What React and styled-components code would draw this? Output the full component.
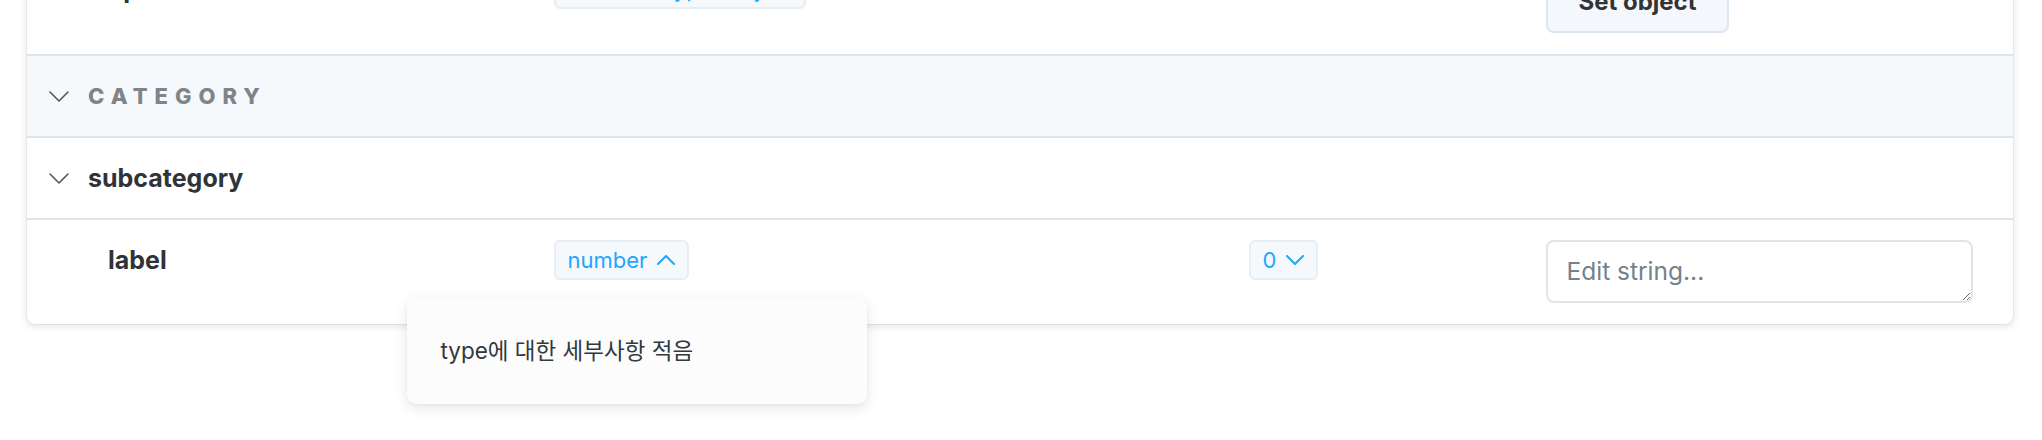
import styled, { createGlobalStyle } from 'styled-components'

const GlobalStyle = createGlobalStyle`
  html, body {
    margin: 0;
    padding: 0;
    background: #fff;
  }
  body {
    min-height: 100vh;
    font-family: Inter, "Noto Sans CJK KR", sans-serif;
    color: #2e3438;
  }
`

// page is scrolled a little: the first row is partly above the top edge
const Page = styled.div`
  box-sizing: border-box;
  min-height: calc(100vh + 51px);
  padding: 0 29px 0 27px;
  margin-top: -51px;
`

const Table = styled.div`
  background: #fff;
  border-radius: 8px;
  box-shadow: 0 0 0 1px rgba(0, 0, 0, 0.05), 0 2px 6px 2px rgba(0, 0, 0, 0.08);
  & > * + * {
    border-top: 2px solid #dee6ea;
  }
`

const Row = styled.div`
  display: grid;
  grid-template-columns: 25% 35% 15% 25%;
`

const Cell = styled.div`
  padding: 20px 30px 21px;
  display: flex;
  align-items: flex-start;
  &:first-child {
    padding-left: 81px;
  }
  &:last-child {
    padding-right: 40px;
  }
`

const SectionRow = styled.div`
  height: 80px;
  display: flex;
  align-items: center;
  gap: 19px;
  padding-left: 22px;
  background: ${p => (p.$sub ? '#fff' : '#f6f9fc')};
`

const SectionTitle = styled.span`
  font-size: ${p => (p.$sub ? '25px' : '22px')};
  font-weight: ${p => (p.$sub ? 700 : 800)};
  letter-spacing: ${p => (p.$sub ? 'normal' : '7px')};
  text-transform: ${p => (p.$sub ? 'none' : 'uppercase')};
  color: ${p => (p.$sub ? '#2e3438' : '#7f8489')};
`

const Name = styled.span`
  font-size: 25px;
  font-weight: 700;
  line-height: 40px;
  color: #2e3438;
`

const Chip = styled.span`
  position: relative;
  display: inline-flex;
  align-items: center;
  gap: 10px;
  height: 40px;
  box-sizing: border-box;
  padding: 0 12px;
  border: 2px solid #e7eef5;
  border-radius: 6px;
  background: #f5f9fc;
  font-size: 22px;
  color: #1ea7fd;
  white-space: nowrap;
`

const Tooltip = styled.div`
  position: absolute;
  left: -149px;
  top: 55px;
  z-index: 2;
  width: 460px;
  box-sizing: border-box;
  padding: 34px;
  border-radius: 9px;
  background: #fcfcfc;
  box-shadow: 0 4px 14px rgba(0, 0, 0, 0.1), 0 1px 3px rgba(0, 0, 0, 0.04);
  font-size: 22.5px;
  line-height: 39px;
  color: #33383c;
`

const Button = styled.button`
  height: 64px;
  padding: 0 30px;
  border: 2px solid #dbe6f1;
  border-radius: 8px;
  background: #f4f7fb;
  font-family: Inter, sans-serif;
  font-size: 24px;
  font-weight: 700;
  color: #333;
`

const TextArea = styled.textarea`
  width: 100%;
  height: 63px;
  box-sizing: border-box;
  padding: 12px 18px;
  border: 2px solid #dfe5ea;
  border-radius: 8px;
  font-family: Inter, sans-serif;
  font-size: 24.5px;
  line-height: 34px;
  color: #2e3438;
  outline: none;
  &::placeholder {
    color: #75818b;
  }
`

function Chevron({ up, size = 20, color = '#53585c', stroke = 1.6 }) {
  const h = size / 2 + 1
  return (
    <svg width={size} height={h} viewBox={`0 0 ${size} ${h}`} fill="none">
      <polyline
        points={up ? `1,${h - 1} ${size / 2},1 ${size - 1},${h - 1}` : `1,1 ${size / 2},${h - 1} ${size - 1},1`}
        stroke={color}
        strokeWidth={stroke}
        strokeLinecap="round"
        strokeLinejoin="round"
      />
    </svg>
  )
}

export default function App() {
  return (
    <>
      <GlobalStyle />
      <Page>
        <Table>
          <Row>
            <Cell><Name>options</Name></Cell>
            <Cell><Chip>ElementsType&lt;Keys&gt;</Chip></Cell>
            <Cell />
            <Cell><Button>Set object</Button></Cell>
          </Row>
          <SectionRow>
            <Chevron />
            <SectionTitle>category</SectionTitle>
          </SectionRow>
          <SectionRow $sub>
            <Chevron />
            <SectionTitle $sub>subcategory</SectionTitle>
          </SectionRow>
          <Row>
            <Cell><Name>label</Name></Cell>
            <Cell>
              <Chip>
                number
                <Chevron up size={18} color="#1ea7fd" stroke={2} />
                <Tooltip>type에 대한 세부사항 적음</Tooltip>
              </Chip>
            </Cell>
            <Cell>
              <Chip>
                0
                <Chevron size={18} color="#1ea7fd" stroke={2} />
              </Chip>
            </Cell>
            <Cell><TextArea placeholder="Edit string..." /></Cell>
          </Row>
        </Table>
      </Page>
    </>
  )
}
